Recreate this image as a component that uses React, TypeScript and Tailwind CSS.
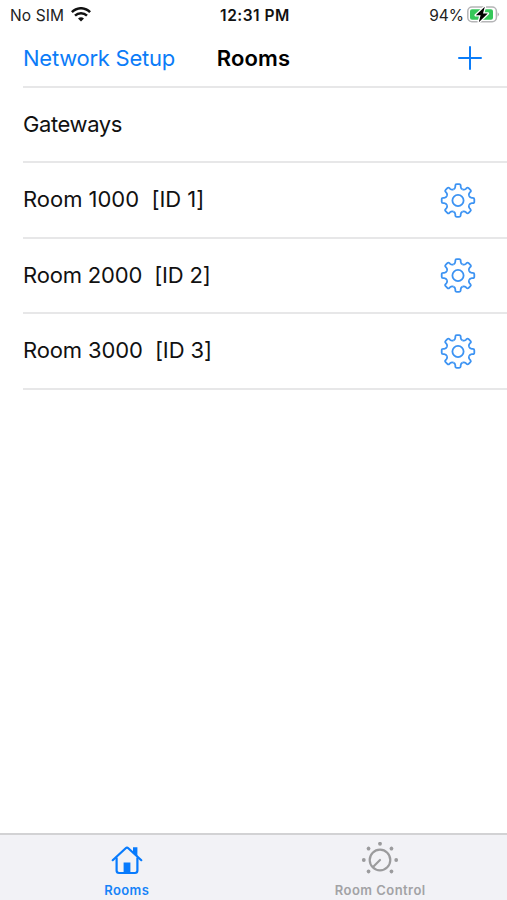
const rooms = [
  { name: 'Room 1000', id: 1, tracking: 'tracking-[-0.02px]' },
  { name: 'Room 2000', id: 2, tracking: 'tracking-[-0.18px]' },
  { name: 'Room 3000', id: 3, tracking: 'tracking-[-0.12px]' },
];

const toothAngles = [0, 45, 90, 135, 180, 225, 270, 315];
const dialAngles = [-135, -90, -45, 0, 45, 90, 135];

function WifiIcon() {
  return (
    <svg width="20" height="15" viewBox="0 0 20 15" fill="none" stroke="#111" strokeWidth="2.5">
      <path d="M.9 5.2C6-.1 14-.1 19.1 5.2" />
      <path d="M4 8.7C7.4 5.4 12.6 5.4 16 8.7" />
      <path d="M7 11.4Q10 9 13 11.4L10 14.5Z" fill="#111" stroke="none" />
    </svg>
  );
}

function BatteryIcon() {
  return (
    <svg width="33" height="17" viewBox="0 0 33 17">
      <rect x=".8" y="1" width="28.6" height="14.8" rx="4.2" fill="#fff" stroke="#b5b5b7" strokeWidth="1.5" />
      <path d="M30.6 6.3Q33.4 8.5 30.6 10.7Z" fill="#b5b5b7" />
      <rect x="3" y="3.3" width="23" height="10.4" rx="2" fill="#35c759" />
      <path
        d="M17.8.8 8.8 9.3h4.8L11.8 16.2 20.8 7.5H16Z"
        fill="#000"
        stroke="#fff"
        strokeWidth="2.6"
        strokeLinejoin="round"
        paintOrder="stroke"
      />
    </svg>
  );
}

function GearIcon() {
  return (
    <svg width="36" height="36" viewBox="-18 -18.5 36 36" fill="none" stroke="#3c93f3" strokeWidth="1.8">
      {toothAngles.map((angle) => (
        <path
          key={angle}
          transform={`rotate(${angle})`}
          d="M-4.6-11.1C-3.4-11.6-2.8-12.4-2.7-13.8V-14.8Q-2.7-16.3-1.2-16.3H1.2Q2.7-16.3 2.7-14.8V-13.8C2.8-12.4 3.4-11.6 4.6-11.1"
        />
      ))}
      <circle r="5.6" />
    </svg>
  );
}

function HouseIcon() {
  return (
    <svg width="32" height="30" viewBox="0 0 32 30" fill="none" stroke="#087bfd" strokeWidth="2.2">
      <path d="M1.7 15.2 14.7 3.2Q16 2 17.3 3.2L30.3 15.2" strokeLinecap="round" />
      <path d="M5.6 12.5V25.5Q5.6 28 8.1 28H23.9Q26.4 28 26.4 25.5V12.5" />
      <path d="M22 2.2h4.4v9L22 7.1Z" fill="#087bfd" stroke="none" />
      <path d="M12.6 17.5h6.8V28h-6.8Z" fill="#087bfd" stroke="none" />
    </svg>
  );
}

function DialIcon() {
  return (
    <svg width="38" height="36" viewBox="-19 -18 38 36" fill="#9b9b9d">
      <circle r="10.3" fill="none" stroke="#9b9b9d" strokeWidth="2.2" />
      <path d="M0 0-7 7" stroke="#9b9b9d" strokeWidth="2.2" strokeLinecap="round" />
      {dialAngles.map((angle) => (
        <circle key={angle} cy="-16.2" r="1.9" transform={`rotate(${angle})`} />
      ))}
    </svg>
  );
}

export default function App() {
  return (
    <div className="flex h-[900px] w-[507px] flex-col overflow-hidden bg-white font-['Inter','Liberation_Sans',sans-serif] text-black">
      <div className="grid h-[29px] grid-cols-[1fr_auto_1fr] items-center pt-px pr-[7px] pl-2.5 text-[15.5px] leading-7">
        <div className="flex items-center gap-[7px]">
          <span className="pt-px tracking-[0.1px] text-[#222]">No SIM</span>
          <div className="pb-[3px]">
            <WifiIcon />
          </div>
        </div>
        <span className="pt-px font-semibold tracking-[0.5px] text-[#111]">12:31 PM</span>
        <div className="flex items-center justify-end gap-[3px]">
          <span className="pt-px text-[#222]">94%</span>
          <div className="pb-[3px]">
            <BatteryIcon />
          </div>
        </div>
      </div>

      <header className="grid h-[57px] shrink-0 grid-cols-[1fr_auto_1fr] items-center pt-px pr-[25px] pl-[25px] text-[22px]">
        <button className="-ml-0.5 text-left tracking-[-0.25px] whitespace-nowrap text-[#0b7cf8]">Network Setup</button>
        <h1 className="font-semibold tracking-[0.1px]">Rooms</h1>
        <button className="flex justify-end" aria-label="Add room">
          <svg width="24" height="24" viewBox="0 0 24 24" fill="none" stroke="#0b7cf8" strokeWidth="2" strokeLinecap="round">
            <path d="M12 1v22M1 12h22" />
          </svg>
        </button>
      </header>

      <ul className="ml-[23px] border-t-2 border-[#e7e7e8] text-[22px] text-[#111]">
        <li className="flex h-[75px] items-center border-b-2 border-[#e7e7e8] tracking-[-0.4px]">Gateways</li>
        {rooms.map((room) => (
          <li key={room.id} className="flex h-[75.5px] items-center justify-between border-b-2 border-[#e7e7e8] pr-[31px]">
            <span className={`whitespace-pre ${room.tracking}`}>{`${room.name}  [ID ${room.id}]`}</span>
            <GearIcon />
          </li>
        ))}
      </ul>

      <nav className="mt-auto grid h-[67px] grid-cols-2 border-t-2 border-[#d2d2d4] bg-[#f2f2f6] text-[13px] font-semibold">
        <div className="flex flex-col items-center pt-2.5 text-[#1683f8]">
          <HouseIcon />
          <span className="mt-[5px] leading-5 tracking-[0.4px]">Rooms</span>
        </div>
        <div className="flex flex-col items-center pt-[7px] text-[#a2a2a5]">
          <DialIcon />
          <span className="mt-0.5 leading-5 tracking-[0.45px]">Room Control</span>
        </div>
      </nav>
    </div>
  );
}
